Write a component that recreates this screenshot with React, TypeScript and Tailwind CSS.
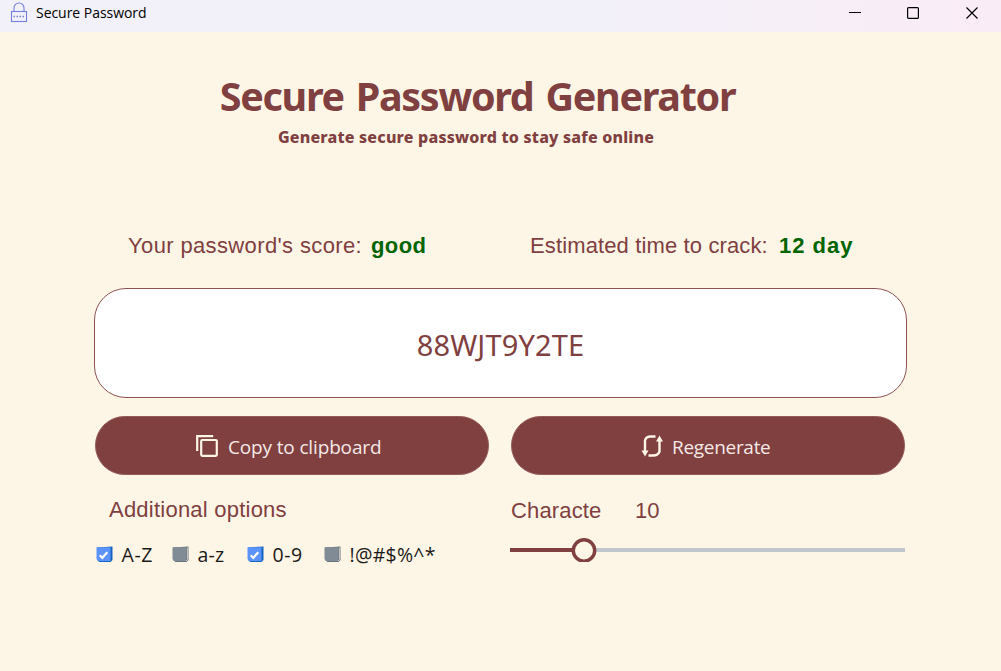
import type { ReactNode } from 'react';

const sans = "font-['Noto_Sans',sans-serif]";
const open = "font-['Open_Sans',sans-serif]";
const arial = "font-['Liberation_Sans',sans-serif]";

function TitleBar() {
  return (
    <header className="flex h-8 w-full shrink-0 bg-gradient-to-r from-[#f2f0f9] from-60% to-[#faecf6]">
      <svg className="ml-[10px] mt-[2px] h-[21px] w-[18px]" viewBox="0 0 18 21" fill="none" stroke="#7480e0" strokeWidth="1.1">
        <rect x="1.5" y="9.5" width="15" height="10" />
        <path d="M4 9.5V6a5 5 0 0 1 10 0v3.500" />
        <path d="M3.500 14.500h11" strokeWidth="1.500" strokeDasharray="1.500 1.500" />
      </svg>
      <span className={`${open} ml-[8px] h-[26px] w-[112px] whitespace-nowrap text-[14px] leading-[26px] tracking-[-0.04px] text-black`}>
        Secure Password
      </span>
      <div className="ml-auto mr-[23px] flex h-[26px] items-center text-black">
        <svg className="mr-[46px]" width="12" height="12" viewBox="0 0 12 12"><path d="M0 5.5h12" stroke="currentColor" /></svg>
        <svg className="mr-[47px]" width="12" height="12" viewBox="0 0 12 12"><rect x=".6" y=".6" width="10.8" height="10.8" rx="1" fill="none" stroke="currentColor" strokeWidth="1.2" /></svg>
        <svg width="12" height="12" viewBox="0 0 12 12"><path d="M.5.5l11 11M11.500.5l-11 11" stroke="currentColor" strokeWidth="1.2" /></svg>
      </div>
    </header>
  );
}

function CheckOption({ checked, label, width, tracking }: { checked: boolean; label: string; width: string; tracking: string }) {
  return (
    <label className={`flex h-6 items-center ${width}`}>
      <svg className="mb-[2px] mr-[8.5px] shrink-0" width="17" height="17" viewBox="0 0 17 17">
        <path d="M1 1.500L16.500 .5V14L14.500 16H3.500L1 14Z" fill={checked ? '#1464c0' : '#68737d'} />
        <path d="M0.500 1.300H14.500V15H3Q1.500 14.500 .5 13Z" fill={checked ? '#5b93fb' : '#808b96'} />
        {checked ? (
          <path d="M3.700 9.200l2.600 2.600l5-5.600" fill="none" stroke="#fff" strokeWidth="2.200" />
        ) : (
          <path d="M15.500 1.500v12l-1.500 1.500" fill="none" stroke="#c3c4c2" />
        )}
      </svg>
      <span className={`${open} whitespace-nowrap text-[19.5px] leading-6 text-[#1c1a18] ${tracking}`}>{label}</span>
    </label>
  );
}

function PillButton({ children, pad }: { children: ReactNode; pad: string }) {
  return (
    <button className={`flex h-[59px] w-[394px] items-center rounded-[30px] border border-[#935a58] bg-[#804040] text-[#f3e9e6] ${pad}`}>
      {children}
    </button>
  );
}

export default function App() {
  return (
    <div className="flex h-[671px] w-[1001px] flex-col overflow-hidden bg-[#fdf5e6] text-[#804040]">
      <TitleBar />
      <h1 className={`${sans} mt-[37px] flex h-[56px] w-[955px] items-center justify-center whitespace-nowrap text-[39.5px] font-bold tracking-[-1.3px] [word-spacing:3px]`}>
        Secure Password Generator
      </h1>
      <p className={`${sans} flex h-6 w-[932px] items-center justify-center whitespace-nowrap text-[16px] font-extrabold tracking-[0.19px]`}>
        Generate secure password to stay safe online
      </p>
      <div className={`${arial} mt-[82px] flex h-[30px] whitespace-nowrap text-[22px] leading-[30px]`}>
        <span className="ml-[128px] w-[243px] tracking-[0.37px]">Your password's score:</span>
        <strong className="w-[159px] tracking-[0.4px] text-[#006400]">good</strong>
        <span className="w-[249px] tracking-[0.13px]">Estimated time to crack:</span>
        <strong className="tracking-[1px] text-[#006400]">12 day</strong>
      </div>
      <main className="ml-[94px] mt-[27px] w-[813px]">
        <output className={`${sans} flex h-[110px] w-full items-center justify-center rounded-[32px] border border-[#8d5353] bg-white pt-[4px] text-[29px] tracking-[0.15px]`}>
          88WJT9Y2TE
        </output>
        <div className="ml-px mt-[18px] flex gap-[22px]">
          <PillButton pad="pl-[100px]">
            <svg className="mr-[10px] mt-px shrink-0" width="22" height="22" viewBox="0 0 22 22" fill="none" stroke="#fdf5e6" strokeWidth="2.200">
              <path d="M1.200 16V1.200h16" />
              <rect x="5.200" y="5" width="15.600" height="15.800" rx="1" />
            </svg>
            <span className={`${open} whitespace-nowrap pt-[3px] text-[19px] tracking-[-0.15px]`}>Copy to clipboard</span>
          </PillButton>
          <PillButton pad="pl-[129px]">
            <svg className="mr-[9px] mt-px shrink-0" width="22" height="22" viewBox="0 0 22 22" fill="none" stroke="#fdf5e6" strokeWidth="2.400">
              <path d="M14.500 1.500H9.500Q5 1.500 4 5.500V17" />
              <path d="M7.500 20.500h5Q17 20.500 18.500 16.500V5" />
              <path d="M.5 15.500h7L4 21.500ZM15 6.500h7L18.500 .5Z" fill="#fdf5e6" stroke="none" />
            </svg>
            <span className={`${open} whitespace-nowrap pt-[3px] text-[19px] tracking-[-0.3px]`}>Regenerate</span>
          </PillButton>
        </div>
        <div className={`${arial} mt-[20px] flex h-[30px] whitespace-nowrap text-[22px] leading-[30px]`}>
          <span className="ml-[15px] w-[402px] tracking-[0.23px]">Additional options</span>
          <span className="mt-px w-[90px] overflow-hidden tracking-[0.15px]">Characters</span>
          <span className="ml-[34px] mt-px">10</span>
        </div>
        <div className="mt-[10px] flex h-[40px]">
          <div className="ml-[2px] flex w-[414px] pt-[8px]">
            <CheckOption checked label="A-Z" width="w-[76px]" tracking="tracking-[0.6px]" />
            <CheckOption checked={false} label="a-z" width="w-[75px]" tracking="tracking-[0.2px]" />
            <CheckOption checked label="0-9" width="w-[77px]" tracking="tracking-[0.5px]" />
            <CheckOption checked={false} label="!@#$%^*" width="w-[120px]" tracking="tracking-[0.25px]" />
          </div>
          <svg className="shrink-0" width="396" height="27" viewBox="0 0 396 27">
            <path d="M74 15H395" stroke="#c1c7cd" strokeWidth="4" />
            <path d="M0 15H74" stroke="#804040" strokeWidth="4" />
            <circle cx="74" cy="15.500" r="10.700" fill="#fdf5e6" stroke="#804040" strokeWidth="3.400" />
          </svg>
        </div>
      </main>
    </div>
  );
}
